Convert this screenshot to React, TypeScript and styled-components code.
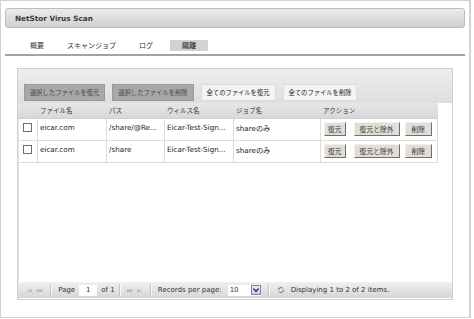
import React from 'react'
import styled, { createGlobalStyle } from 'styled-components'

const GlobalStyle = createGlobalStyle`
  html, body {
    margin: 0;
    padding: 0;
    background: #fff;
  }
  body {
    font-family: 'DejaVu Sans', 'Noto Sans CJK JP', sans-serif;
    font-size: 7px;
    color: #222;
  }
`

const Frame = styled.div`
  box-sizing: border-box;
  width: 471px;
  height: 318px;
  border: 1px solid #d2d2d2;
  border-right-width: 2px;
  padding: 7px 4px 0 4px;
  display: flex;
  flex-direction: column;
`

const TitleBar = styled.div`
  height: 20px;
  box-sizing: border-box;
  border: 1px solid #bcbcbc;
  border-radius: 3px;
  background: linear-gradient(#ebebeb, #d0d0d0);
  display: flex;
  align-items: center;
  padding-left: 9px;
  font-size: 7.3px;
  font-weight: bold;
  color: #3a3a3a;
`

const Tabs = styled.div`
  margin-top: 12px;
  height: 14px;
  border-bottom: 2px solid #a3a3a3;
  display: flex;
  align-items: flex-start;
  padding-left: 19px;
`

const Tab = styled.div<{ $active?: boolean }>`
  font-family: 'Noto Sans CJK JP', sans-serif;
  font-size: 7px;
  height: 11px;
  line-height: 11px;
  padding: 0 ${(p) => (p.$active ? 12 : 6)}px;
  margin-right: ${(p) => (p.$active ? 0 : 11)}px;
  background: ${(p) => (p.$active ? '#d2d2d2' : 'transparent')};
  color: ${(p) => (p.$active ? '#444' : '#333')};
  font-weight: ${(p) => (p.$active ? 'bold' : 'normal')};
`

const Panel = styled.div`
  margin: 12px 12px 0 12px;
  height: 232px;
  box-sizing: border-box;
  border: 1px solid #cfcfcf;
  box-shadow: inset 1px 0 0 #e6e6e6;
  display: flex;
  flex-direction: column;
`

const Toolbar = styled.div`
  height: 34px;
  box-sizing: border-box;
  background: linear-gradient(#eeeeee, #dedede);
  display: flex;
  align-items: flex-end;
  gap: 7px;
  padding: 0 0 2px 6px;
`

const ToolButton = styled.div<{ $dark?: boolean }>`
  font-family: 'Noto Sans CJK JP', sans-serif;
  font-size: 6.3px;
  height: 15px;
  line-height: 15px;
  padding: 0 5px;
  color: ${(p) => (p.$dark ? '#444' : '#222')};
  background: ${(p) => (p.$dark ? '#a8a8a8' : '#f4f4f4')};
  border: 1px solid ${(p) => (p.$dark ? '#9a9a9a' : '#dcdcdc')};
`

const Table = styled.div`
  width: 420px;
  display: grid;
  grid-template-columns: 20px 69px 58px 69px 87px 117px;
`

const HeadCell = styled.div`
  height: 15px;
  line-height: 15px;
  padding-left: 2px;
  font-family: 'Noto Sans CJK JP', sans-serif;
  font-size: 6.5px;
  color: #333;
  background: linear-gradient(#e6e6e6, #d8d8d8);
  border-bottom: 1px solid #cfcfcf;
`

const Cell = styled.div`
  height: 22px;
  box-sizing: border-box;
  padding: 4px 2px 0 2px;
  border-right: 1px solid #dcdcdc;
  border-bottom: 1px solid #dcdcdc;
  white-space: nowrap;
  overflow: hidden;
  font-size: 7.2px;
  font-family: 'DejaVu Sans', 'Noto Sans CJK JP', sans-serif;
  color: #222;
`

const CheckCell = styled(Cell)`
  padding: 4px 0 0 5px;
`

const Check = styled.div`
  width: 7px;
  height: 7px;
  border: 1px solid #6f6f6f;
  background: #fff;
`

const Actions = styled(Cell)`
  display: flex;
  padding: 3px 0 0 3px;
`

const ActButton = styled.div<{ $pad: number; $gap: number }>`
  font-family: 'Noto Sans CJK JP', sans-serif;
  font-size: 6.8px;
  height: 12px;
  line-height: 12px;
  padding: 0 ${(p) => p.$pad}px;
  margin-right: ${(p) => p.$gap}px;
  background: #e2ddd6;
  border: 1px solid #f3f0ec;
  border-right-color: #6e6e6e;
  border-bottom-color: #6e6e6e;
  color: #333;
`

const Spacer = styled.div`
  flex: 1;
`

const Footer = styled.div`
  height: 16px;
  margin-bottom: 1px;
  background: linear-gradient(#f0f0f0, #d6d6d6);
  display: flex;
  align-items: center;
  padding-left: 9px;
  font-size: 7px;
  color: #333;
`

const NavIcon = styled.span`
  color: #b8b8b8;
  font-size: 5px;
  letter-spacing: -1px;
  margin-right: 5px;
`

const Sep = styled.div`
  width: 1px;
  height: 12px;
  background: #c6c6c6;
  border-right: 1px solid #f8f8f8;
  margin: 0 6px 0 4px;
`

const PageInput = styled.div`
  width: 18px;
  height: 11px;
  line-height: 11px;
  background: #fff;
  text-align: center;
  margin: 0 4px;
`

const Select = styled.div`
  display: flex;
  align-items: center;
  margin: 0 3px 0 6px;
  height: 11px;
  background: #fff;
  width: 33px;
  justify-content: space-between;
  padding-left: 2px;
  box-sizing: border-box;
`

const SelectArrow = styled.div`
  width: 10px;
  height: 10px;
  box-sizing: border-box;
  border: 1px solid #7a8aa8;
  background: linear-gradient(#e4e9f2, #c2cde0);
  display: flex;
  align-items: center;
  justify-content: center;
`

const Refresh = styled.svg`
  margin: 0 6px 0 1px;
`

const rows = [
  { file: 'eicar.com', path: '/share/@Re...', virus: 'Eicar-Test-Sign...', job: 'shareのみ' },
  { file: 'eicar.com', path: '/share', virus: 'Eicar-Test-Sign...', job: 'shareのみ' },
]

export default function App() {
  return (
    <>
      <GlobalStyle />
      <Frame>
        <TitleBar>NetStor Virus Scan</TitleBar>
        <Tabs>
          <Tab>概要</Tab>
          <Tab>スキャンジョブ</Tab>
          <Tab>ログ</Tab>
          <Tab $active>隔離</Tab>
        </Tabs>
        <Panel>
          <Toolbar>
            <ToolButton $dark>選択したファイルを復元</ToolButton>
            <ToolButton $dark>選択したファイルを削除</ToolButton>
            <ToolButton>全てのファイルを復元</ToolButton>
            <ToolButton>全てのファイルを削除</ToolButton>
          </Toolbar>
          <Table>
            <HeadCell />
            <HeadCell>ファイル名</HeadCell>
            <HeadCell>パス</HeadCell>
            <HeadCell>ウィルス名</HeadCell>
            <HeadCell>ジョブ名</HeadCell>
            <HeadCell>アクション</HeadCell>
            {rows.map((r, i) => (
              <React.Fragment key={i}>
                <CheckCell>
                  <Check />
                </CheckCell>
                <Cell>{r.file}</Cell>
                <Cell>{r.path}</Cell>
                <Cell>{r.virus}</Cell>
                <Cell>{r.job}</Cell>
                <Actions>
                  <ActButton $pad={3} $gap={8}>復元</ActButton>
                  <ActButton $pad={5} $gap={5}>復元と除外</ActButton>
                  <ActButton $pad={6} $gap={0}>削除</ActButton>
                </Actions>
              </React.Fragment>
            ))}
          </Table>
          <Spacer />
          <Footer>
            <NavIcon>|◀</NavIcon>
            <NavIcon>◀◀</NavIcon>
            <Sep />
            <span>Page</span>
            <PageInput>1</PageInput>
            <span>of 1</span>
            <Sep />
            <NavIcon>▶▶</NavIcon>
            <NavIcon>▶|</NavIcon>
            <Sep />
            <span>Records per page:</span>
            <Select>
              <span>10</span>
              <SelectArrow>
                <svg width="6" height="4" viewBox="0 0 6 4">
                  <path d="M0.5 0.5 L3 3.5 L5.5 0.5" fill="none" stroke="#2a3a5a" strokeWidth="1.3" />
                </svg>
              </SelectArrow>
            </Select>
            <Sep />
            <Refresh width="8" height="8" viewBox="0 0 8 8">
              <path d="M1.5 4 A2.5 2.5 0 0 1 6 2.5" fill="none" stroke="#666" strokeWidth="1" />
              <path d="M6.5 4 A2.5 2.5 0 0 1 2 5.5" fill="none" stroke="#666" strokeWidth="1" />
            </Refresh>
            <span>Displaying 1 to 2 of 2 items.</span>
          </Footer>
        </Panel>
      </Frame>
    </>
  )
}
